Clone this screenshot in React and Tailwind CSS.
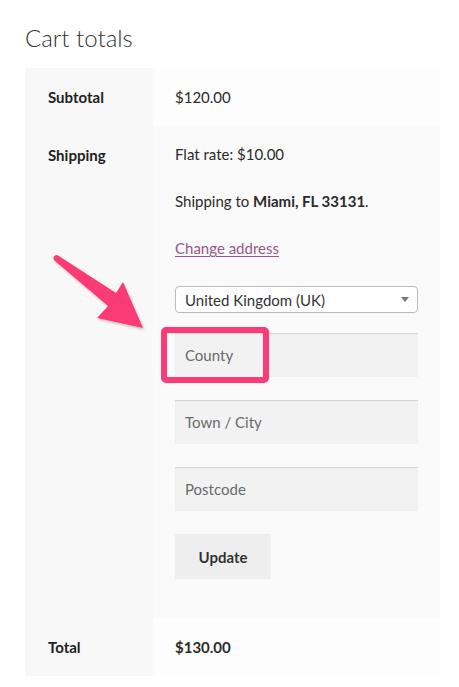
import React from 'react';

const font = { fontFamily: 'Lato, "Open Sans", sans-serif' };

const Row = ({ label, children, tdClass }) => (
  <div className="flex">
    <div className="w-[128px] shrink-0 bg-[#f8f8f8] px-[23px] py-4 text-[15px] font-bold leading-[26px] text-[#222]">
      {label}
    </div>
    <div className={`flex-1 px-[22px] py-4 text-[15px] leading-[26px] text-[#2b2b2b] ${tdClass}`}>
      {children}
    </div>
  </div>
);

const Field = ({ placeholder, className }) => (
  <div
    className={`flex h-[44px] w-[243px] items-center bg-[#f2f2f2] px-[10px] text-[15px] text-[#6a6a6a] shadow-[inset_0_1px_1px_rgba(0,0,0,0.13)] ${className}`}
  >
    {placeholder}
  </div>
);

export default function App() {
  return (
    <div className="relative h-[687px] w-[459px] overflow-hidden bg-white" style={font}>
      <div className="px-[25px] pt-[24px]">
        <h2 className="mb-[16px] text-[24px] font-light leading-[28px] text-[#333]">Cart totals</h2>

        <div className="w-[415px]">
          <Row label="Subtotal" tdClass="bg-[#fdfdfd]">
            $120.00
          </Row>

          <Row label="Shipping" tdClass="bg-[#fafafa]">
            <div className="-mt-px">Flat rate: $10.00</div>
            <div className="mt-[21px]">
              Shipping to <span className="font-bold">Miami, FL 33131</span>.
            </div>
            <div className="mt-[21px]">
              <span className="text-[#96588a] underline underline-offset-2">Change address</span>
            </div>

            <div className="mt-[25px] flex h-[27px] w-[243px] items-center justify-between rounded-[4px] border border-[#bbb] bg-white pl-[9px] pr-[8px] text-[15px] text-[#333]">
              <span>United Kingdom (UK)</span>
              <span className="h-0 w-0 border-x-[4px] border-t-[5px] border-x-transparent border-t-[#777]" />
            </div>

            <Field placeholder="County" className="mt-[20px]" />
            <Field placeholder="Town / City" className="mt-[23px]" />
            <Field placeholder="Postcode" className="mt-[23px]" />

            <div className="mb-[23px] mt-[23px] flex h-[45px] w-[96px] items-center justify-center bg-[#eeeeee] text-[15px] font-bold text-[#333]">
              Update
            </div>
          </Row>

          <Row label="Total" tdClass="bg-[#fdfdfd] font-bold">
            $130.00
          </Row>
        </div>
      </div>

      {/* annotation: highlight box */}
      <div className="absolute left-[161px] top-[327px] h-[56px] w-[108px] rounded-[5px] border-[6px] border-[#fb3a76]" />

      {/* annotation: arrow */}
      <svg className="absolute left-0 top-0" width="459" height="687" viewBox="0 0 459 687">
        <defs>
          <filter id="sh" x="-20%" y="-20%" width="140%" height="140%">
            <feDropShadow dx="1" dy="1.5" stdDeviation="1.2" floodColor="#000" floodOpacity="0.25" />
          </filter>
        </defs>
        <path
          d="M54 256.5 Q55.5 254 58 255.5 L116 293 L123 282 L143 328 L97 318 L108 306 L55 261 Q52.5 259 54 256.5 Z"
          fill="#fb3a76"
          filter="url(#sh)"
        />
      </svg>
    </div>
  );
}
